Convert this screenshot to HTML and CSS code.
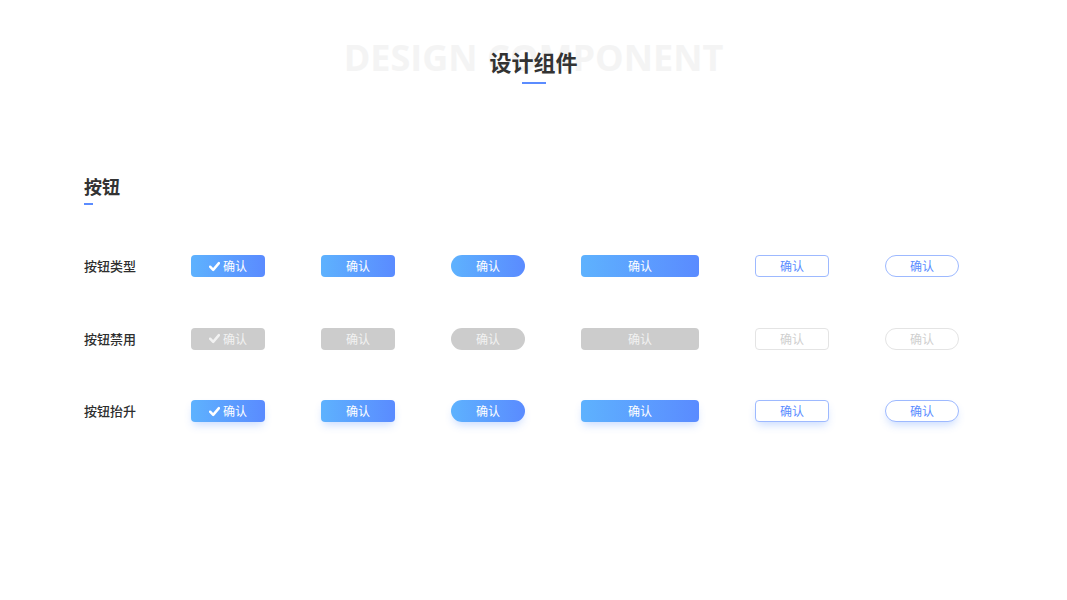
FILE: index.html
```html
<!DOCTYPE html>
<html lang="zh">
<head>
<meta charset="utf-8">
<title>设计组件</title>
<link rel="stylesheet" href="styles.css">
</head>
<body>
<header class="header">
  <div class="header-stack">
    <div class="header-bg">DESIGN COMPONENT</div>
    <h1 class="header-title">设计组件</h1>
  </div>
  <div class="header-line"></div>
</header>

<section class="section">
  <h2 class="section-title">按钮</h2>
  <div class="section-line"></div>

  <div class="rows">
    <div class="row">
      <div class="row-label">按钮类型</div>
      <div class="btn btn-fill btn-sm"><svg class="check" viewBox="0 0 10 10"><path d="M1 5.2 L3.8 8 L9 2" fill="none" stroke="currentColor" stroke-width="2.3" stroke-linecap="round" stroke-linejoin="round"/></svg>确认</div>
      <div class="btn btn-fill btn-sm">确认</div>
      <div class="btn btn-fill btn-sm btn-pill">确认</div>
      <div class="btn btn-fill btn-lg">确认</div>
      <div class="btn btn-line btn-sm">确认</div>
      <div class="btn btn-line btn-sm btn-pill">确认</div>
    </div>

    <div class="row">
      <div class="row-label">按钮禁用</div>
      <div class="btn btn-off btn-sm"><svg class="check" viewBox="0 0 10 10"><path d="M1 5.2 L3.8 8 L9 2" fill="none" stroke="currentColor" stroke-width="2.3" stroke-linecap="round" stroke-linejoin="round"/></svg>确认</div>
      <div class="btn btn-off btn-sm">确认</div>
      <div class="btn btn-off btn-sm btn-pill">确认</div>
      <div class="btn btn-off btn-lg">确认</div>
      <div class="btn btn-line-off btn-sm">确认</div>
      <div class="btn btn-line-off btn-sm btn-pill">确认</div>
    </div>

    <div class="row">
      <div class="row-label">按钮抬升</div>
      <div class="btn btn-fill btn-sm btn-raised"><svg class="check" viewBox="0 0 10 10"><path d="M1 5.2 L3.8 8 L9 2" fill="none" stroke="currentColor" stroke-width="2.3" stroke-linecap="round" stroke-linejoin="round"/></svg>确认</div>
      <div class="btn btn-fill btn-sm btn-raised">确认</div>
      <div class="btn btn-fill btn-sm btn-pill btn-raised">确认</div>
      <div class="btn btn-fill btn-lg btn-raised">确认</div>
      <div class="btn btn-line btn-sm btn-raised">确认</div>
      <div class="btn btn-line btn-sm btn-pill btn-raised">确认</div>
    </div>
  </div>
</section>
</body>
</html>
```

FILE: styles.css
```css
* { box-sizing: border-box; }

html, body {
  margin: 0;
  padding: 0;
  background: #ffffff;
}

body {
  width: 1067px;
  height: 600px;
  overflow: hidden;
  font-family: "Noto Sans CJK SC", "Noto Sans", sans-serif;
  color: #333333;
}

.header {
  display: flex;
  flex-direction: column;
  align-items: center;
  padding-top: 40px;
}

.header-stack {
  display: grid;
  justify-items: center;
}

.header-bg,
.header-title {
  grid-area: 1 / 1;
}

.header-bg {
  font-family: "Open Sans", sans-serif;
  font-weight: 700;
  font-size: 36px;
  line-height: 36px;
  letter-spacing: 0;
  color: #f4f4f4;
  white-space: nowrap;
}

.header-title {
  margin: 6px 0 0 0;
  font-size: 22px;
  line-height: 30px;
  font-weight: 700;
  color: #333333;
}

.header-line {
  margin-top: 6px;
  width: 24px;
  height: 2px;
  background: #5b8cff;
}

.section {
  padding-left: 84px;
  margin-top: 90px;
}

.section-title {
  margin: 0;
  font-size: 18px;
  line-height: 24px;
  font-weight: 700;
  color: #333333;
}

.section-line {
  margin-top: 5px;
  width: 9px;
  height: 2px;
  background: #5b8cff;
}

.rows {
  margin-top: 50px;
  display: flex;
  flex-direction: column;
  gap: 50.5px;
}

.row {
  display: flex;
  align-items: center;
  gap: 56px;
  height: 22px;
}

.row-label {
  width: 51px;
  font-size: 13px;
  line-height: 22px;
  font-weight: 500;
  color: #2e2e2e;
  white-space: nowrap;
}

.btn {
  height: 22px;
  display: flex;
  align-items: center;
  justify-content: center;
  gap: 3px;
  font-size: 12px;
  line-height: 22px;
  border-radius: 4px;
  white-space: nowrap;
}

.btn-sm { width: 74px; }
.btn-lg { width: 118px; }
.btn-pill { border-radius: 11px; }

.btn-fill {
  background: linear-gradient(90deg, #5eb2fe 0%, #5a8bff 100%);
  color: #ffffff;
}

.btn-off {
  background: #cccccc;
  color: #f2f2f2;
}

.btn-line {
  background: #ffffff;
  border: 1px solid #9db9ff;
  color: #5b8cff;
}

.btn-line-off {
  background: #ffffff;
  border: 1px solid #e4e4e4;
  color: #cfcfcf;
}

.btn-raised {
  box-shadow: 0 5px 8px -2px rgba(80, 140, 255, 0.3);
}

.check {
  width: 11px;
  height: 11px;
  flex: none;
}
```
